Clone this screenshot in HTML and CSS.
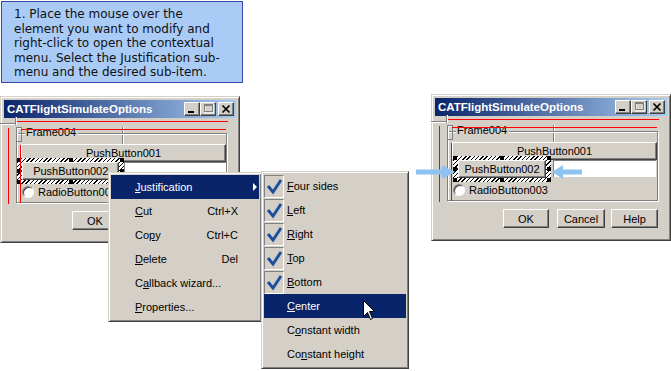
FILE: index.html
```html
<!DOCTYPE html>
<html>
<head>
<meta charset="utf-8">
<title>Justification</title>
<link rel="stylesheet" href="styles.css">
</head>
<body>
<div class="canvas">

  <div class="callout">1. Place the mouse over the<br>element you want to modify and<br>right-click to open the contextual<br>menu. Select the Justification sub-<br>menu and the desired sub-item.</div>

  <!-- Left dialog -->
  <div class="dialog dlg-left">
    <div class="titlebar">
      <span class="title">CATFlightSimulateOptions</span>
      <span class="tbtns">
        <span class="tbtn"><svg width="14" height="12"><rect x="3" y="8" width="6" height="2" fill="#000"/></svg></span>
        <span class="tbtn"><svg width="14" height="12"><rect x="4" y="2" width="9" height="8" fill="none" stroke="#fff"/><rect x="3" y="1" width="9" height="2" fill="#808080"/><rect x="3.5" y="1.5" width="8" height="7" fill="none" stroke="#808080"/></svg></span>
        <span class="tbtn close"><svg width="14" height="12"><path d="M3.5 2.5l7 7M10.5 2.5l-7 7" stroke="#000" stroke-width="1.7"/></svg></span>
      </span>
    </div>
    <div class="dbody">
      <span class="guide gl-h"></span>
      <span class="guide gl-v"></span>
      <span class="guide gl-v2"></span>
      <div class="frame">
        <span class="gl-box"></span>
        <span class="legend">Frame004</span>
        <div class="btn pb1">PushButton001</div>
        <div class="row2 row2-left">
          <div class="sel">
            <div class="btn pb2">PushButton002</div>
            <span class="hd h-tl"></span><span class="hd h-tm"></span><span class="hd h-tr"></span>
            <span class="hd h-ml"></span><span class="hd h-mr"></span>
            <span class="hd h-bl"></span><span class="hd h-bm"></span><span class="hd h-br"></span>
          </div>
          <div class="field"></div>
        </div>
        <div class="radio-row"><span class="radio"></span><span>RadioButton003</span></div>
      </div>
      <div class="actions">
        <div class="btn act ok">OK</div>
        <div class="btn act cancel"></div>
        <div class="btn act help"></div>
      </div>
      <span class="guide r-h1"></span>
      <span class="guide r-h2"></span>
      <span class="guide r-v1"></span>
      <span class="guide r-v2"></span>
    </div>
  </div>

  <!-- Right dialog -->
  <div class="dialog dlg-right">
    <div class="titlebar">
      <span class="title">CATFlightSimulateOptions</span>
      <span class="tbtns">
        <span class="tbtn"><svg width="14" height="12"><rect x="3" y="8" width="6" height="2" fill="#000"/></svg></span>
        <span class="tbtn"><svg width="14" height="12"><rect x="4" y="2" width="9" height="8" fill="none" stroke="#fff"/><rect x="3" y="1" width="9" height="2" fill="#808080"/><rect x="3.5" y="1.5" width="8" height="7" fill="none" stroke="#808080"/></svg></span>
        <span class="tbtn close"><svg width="14" height="12"><path d="M3.5 2.5l7 7M10.5 2.5l-7 7" stroke="#000" stroke-width="1.7"/></svg></span>
      </span>
    </div>
    <div class="dbody">
      <span class="guide gl-h"></span>
      <span class="guide gl-v"></span>
      <span class="guide gl-v2"></span>
      <div class="frame">
        <span class="gl-box"></span>
        <span class="legend">Frame004</span>
        <div class="btn pb1">PushButton001</div>
        <div class="row2 row2-right">
          <div class="sel">
            <div class="btn pb2">PushButton002</div>
            <span class="hd h-tl"></span><span class="hd h-tm"></span><span class="hd h-tr"></span>
            <span class="hd h-ml"></span><span class="hd h-mr"></span>
            <span class="hd h-bl"></span><span class="hd h-bm"></span><span class="hd h-br"></span>
          </div>
          <div class="field"><span class="dots">...</span></div>
        </div>
        <div class="radio-row"><span class="radio"></span><span>RadioButton003</span></div>
      </div>
      <div class="actions">
        <div class="btn act ok">OK</div>
        <div class="btn act cancel">Cancel</div>
        <div class="btn act help">Help</div>
      </div>
      <span class="guide r-h1"></span>
      <span class="guide r-h2"></span>
      <span class="guide r-v1"></span>
      <span class="guide r-v2"></span>
    </div>
  </div>

  <!-- Arrows -->
  <svg class="arrow arrow-l" width="40" height="16" viewBox="0 0 40 16"><polygon points="0,5.5 26,5.5 26,1 39,8 26,15 26,10.5 0,10.5" fill="#8ec2f1"/></svg>
  <svg class="arrow arrow-r" width="32" height="16" viewBox="0 0 32 16"><polygon points="1,8 12,1 12,5.5 31,5.5 31,10.5 12,10.5 12,15" fill="#8ec2f1"/></svg>

  <!-- Context menu -->
  <div class="menu ctx">
    <div class="mi hl"><span><u>J</u>ustification</span><span class="subarrow"></span></div>
    <div class="mi"><span><u>C</u>ut</span><span class="sc">Ctrl+X</span></div>
    <div class="mi"><span>Co<u>p</u>y</span><span class="sc">Ctrl+C</span></div>
    <div class="mi"><span><u>D</u>elete</span><span class="sc">Del</span></div>
    <div class="mi"><span>C<u>a</u>llback wizard...</span></div>
    <div class="mi"><span><u>P</u>roperties...</span></div>
  </div>

  <!-- Submenu -->
  <div class="menu sub">
    <div class="mi chkd"><span class="chk"><svg width="18" height="21" viewBox="0 0 18 21"><polyline points="3,10 8,16 16,4" fill="none" stroke="#1f4f9e" stroke-width="3"/></svg></span><span><u>F</u>our sides</span></div>
    <div class="mi chkd"><span class="chk"><svg width="18" height="21" viewBox="0 0 18 21"><polyline points="3,10 8,16 16,4" fill="none" stroke="#1f4f9e" stroke-width="3"/></svg></span><span><u>L</u>eft</span></div>
    <div class="mi chkd"><span class="chk"><svg width="18" height="21" viewBox="0 0 18 21"><polyline points="3,10 8,16 16,4" fill="none" stroke="#1f4f9e" stroke-width="3"/></svg></span><span><u>R</u>ight</span></div>
    <div class="mi chkd"><span class="chk"><svg width="18" height="21" viewBox="0 0 18 21"><polyline points="3,10 8,16 16,4" fill="none" stroke="#1f4f9e" stroke-width="3"/></svg></span><span><u>T</u>op</span></div>
    <div class="mi chkd"><span class="chk"><svg width="18" height="21" viewBox="0 0 18 21"><polyline points="3,10 8,16 16,4" fill="none" stroke="#1f4f9e" stroke-width="3"/></svg></span><span><u>B</u>ottom</span></div>
    <div class="mi hl"><span><u>C</u>enter</span></div>
    <div class="mi"><span>C<u>o</u>nstant width</span></div>
    <div class="mi"><span>Co<u>n</u>stant height</span></div>
  </div>

  <svg class="cursor" width="13" height="21" viewBox="0 0 13 21"><path d="M0.5 0.5 V16.5 L4.5 12.5 L7.5 19.5 L9.5 18.5 L6.5 11.5 H11.5 Z" fill="#fff" stroke="#000"/></svg>
</div>
</body>
</html>
```

FILE: styles.css
```css
* { box-sizing: border-box; }
html, body { margin: 0; padding: 0; background: #fff; overflow: hidden; }
body { font-family: "Liberation Sans", Arial, sans-serif; font-size: 11px; color: #000; }
.canvas { position: relative; width: 671px; height: 371px; }

.callout {
  position: absolute; left: 1px; top: 1px; width: 242px; height: 82px;
  background: #a9cbf6; border: 1px solid #3a46a6;
  padding: 5px 0 0 12px;
  font-family: "DejaVu Sans", Verdana, sans-serif; font-size: 12px; line-height: 14.5px;
  white-space: nowrap; color: #111;
}

.dialog {
  position: absolute; width: 240px; height: 147px; background: #d4d0c8;
  border: 1px solid; border-color: #d4d0c8 #404040 #404040 #d4d0c8;
  box-shadow: inset 1px 1px #fff, inset -1px -1px #808080;
  padding: 3px;
}
.dlg-left { left: 0; top: 96px; }
.dlg-right { left: 431px; top: 94px; }

.titlebar {
  height: 18px; display: flex; align-items: center; justify-content: space-between;
  padding: 0 2px 0 3px; background: linear-gradient(90deg, #0a246a, #a6caf0);
}
.title { color: #fff; font-weight: bold; font-size: 11.5px; }
.tbtns { display: flex; }
.tbtn {
  width: 16px; height: 14px; background: #d4d0c8; display: block;
  border: 1px solid; border-color: #fff #404040 #404040 #fff;
  box-shadow: inset -1px -1px #808080;
}
.tbtn svg { display: block; }
.tbtn.close { margin-left: 2px; }

.dbody { position: relative; height: 121px; display: flow-root; }

.frame {
  position: relative; margin: 15px 0 0 12px; width: 211px; height: 70px;
  border: 1px solid #808080; box-shadow: inset 1px 1px #fff, 1px 1px #fff;
}
.legend { position: absolute; left: 8px; top: -8px; background: #d4d0c8; padding: 0 2px 0 1px; line-height: 13px; }
.gl-box {
  position: absolute; left: -1px; top: -7px; width: 6px; height: 15px;
  border: 1px solid #808080; box-shadow: inset 1px 1px #fff;
}

.btn {
  background: #d4d0c8; display: flex; align-items: center; justify-content: center;
  border: 1px solid; border-color: #fff #404040 #404040 #fff;
  box-shadow: inset -1px -1px #808080;
}
.pb1 { margin: 10px 0 0 4px; height: 18px; position: relative; }

.row2 { position: relative; display: flex; align-items: flex-start; margin-top: -4px; }
.sel {
  position: relative; padding: 4px 5px; height: 26px;
  background: repeating-linear-gradient(135deg, #000 0 1px, #fff 1px 3px);
}
.pb2 { height: 18px; }
.row2-left .sel { width: 108px; }
.row2-left .field { width: 102px; }
.row2-right .sel { width: 98px; margin-left: 5px; }
.row2-right .field { width: 103px; margin-left: 2px; }
.field {
  height: 17px; margin-top: 4px; background: #fff;
  border-top: 1px solid #808080; border-left: 1px solid #808080;
  position: relative; padding-left: 8px; line-height: 14px;
}
.dots { letter-spacing: 1px; }

.hd { position: absolute; width: 4px; height: 4px; background: #000; }
.h-tl { left: 0; top: 0; }
.h-tm { left: calc(50% - 2px); top: 0; }
.h-tr { right: 0; top: 0; }
.h-ml { left: 0; top: 11px; }
.h-mr { right: 0; top: 11px; }
.h-bl { left: 0; bottom: 0; }
.h-bm { left: calc(50% - 2px); bottom: 0; }
.h-br { right: 0; bottom: 0; }

.radio-row { display: flex; align-items: center; gap: 4px; height: 16px; margin-left: 5px; }
.radio {
  width: 12px; height: 12px; border-radius: 50%; background: #fff;
  border: 1px solid; border-color: #808080 #fff #fff #808080;
  box-shadow: inset 1px 1px #404040;
}

.actions { display: flex; margin: 8px 0 0 68px; }
.act { height: 19px; }
.ok { width: 46px; }
.cancel { width: 48px; margin-left: 8px; }
.help { width: 47px; margin-left: 6px; }

.guide { position: absolute; display: block; }
.r-h1, .r-h2, .r-v1, .r-v2 { background: #f00; }
.r-h1 { left: 13px; top: 3px; width: 211px; height: 1px; }
.r-h2 { left: 17px; top: 11px; width: 205px; height: 1px; }
.r-v1 { left: 4px; top: 10px; width: 1px; height: 76px; }
.r-v2 { left: 16px; top: 27px; width: 1px; height: 58px; }
.gl-h { left: -4px; top: 5px; width: 16px; height: 2px; border-top: 1px solid #808080; border-bottom: 1px solid #fff; }
.gl-v { left: 11px; top: -1px; width: 2px; height: 8px; border-left: 1px solid #808080; border-right: 1px solid #fff; }
.gl-v2 { left: 118px; top: 9px; width: 2px; height: 17px; border-left: 1px solid #808080; border-right: 1px solid #fff; }

.arrow { position: absolute; display: block; }
.arrow-l { left: 416px; top: 164px; }
.arrow-r { left: 551px; top: 164px; }

.menu {
  position: absolute; background: #d4d0c8;
  border: 1px solid; border-color: #d4d0c8 #404040 #404040 #d4d0c8;
  box-shadow: inset 1px 1px #fff, inset -1px -1px #808080;
  padding: 2px;
}
.ctx { left: 108px; top: 172px; width: 154px; height: 150px; }
.sub { left: 261px; top: 171px; width: 148px; height: 198px; }
.mi {
  position: relative; height: 24px; display: flex; align-items: center;
  padding-left: 24px; padding-right: 21px; white-space: nowrap;
}
.mi .sc { margin-left: auto; }
.mi.hl { background: #0a246a; color: #fff; }
.subarrow {
  position: absolute; right: 2px; top: 8px; width: 0; height: 0;
  border-left: 4px solid #fff; border-top: 4px solid transparent; border-bottom: 4px solid transparent;
}
.sub .mi { padding-left: 23px; padding-right: 4px; }
.sub .mi.chkd { padding-left: 0; }
.chk {
  width: 20px; height: 23px; margin-right: 3px; display: flex; align-items: center; justify-content: center;
  border: 1px solid; border-color: #808080 #fff #fff #808080;
}
.chk svg { display: block; }

.cursor { position: absolute; left: 363px; top: 300px; display: block; }
```
